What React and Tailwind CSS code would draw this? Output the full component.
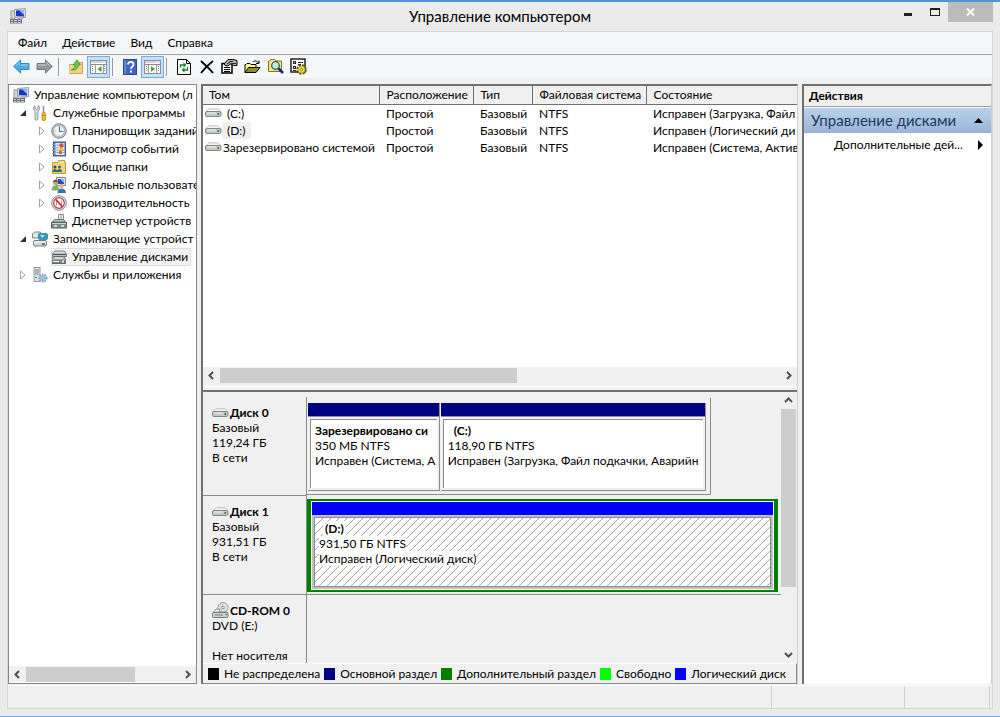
import clsx from "clsx"

function ComputerIcon() {
  return (
    <svg width="16" height="16" viewBox="0 0 16 16">
      <rect x="1" y="3" width="4" height="8" fill="#d4d8dc" stroke="#8d959c" />
      <path d="M4.500 1.500L15.500.5v9l-11-.5z" fill="#d9dde0" stroke="#9aa0a5" />
      <path d="M6 2.500L14 2v6.500L6 8z" fill="#1636c8" />
      <path d="M9 2.300L14 2v5z" fill="#8fbcf6" />
      <path d="M8 9.500h5l1 1.500H7z" fill="#b4b8bc" />
      <rect x="0" y="11" width="12" height="4.500" fill="#6f777d" />
      <path d="M1 12.500h2M4 12.500h3M8 12.500h3M1 14.500h2M4 14.500h3M8 14.500h3" stroke="#c9ced1" />
    </svg>
  )
}

function ToolsIcon() {
  return (
    <svg width="16" height="16" viewBox="0 0 16 16">
      <path d="M3 .5v3l1.500 1 1.500-1v-3c1.500 1 2 2.500 1.500 4L6 6.500V14c0 1.500-3 1.500-3 0V6.500C1 5 1 2 3 .5z" fill="#d7dadd" stroke="#80868b" strokeWidth="0.800" />
      <path d="M11.500 1v7" stroke="#8b8f93" strokeWidth="1.500" />
      <rect x="10" y="7.500" width="3.500" height="8" rx="1.500" fill="#f7bd22" stroke="#b98310" strokeWidth="0.800" />
      <path d="M10 10.500h3.500" stroke="#b27b0a" strokeWidth="0.800" />
    </svg>
  )
}

function ClockIcon() {
  return (
    <svg width="16" height="16" viewBox="0 0 16 16">
      <circle cx="8" cy="8" r="7.300" fill="#c3c7ca" stroke="#84898e" />
      <circle cx="8" cy="8" r="5.500" fill="#f3f8fa" stroke="#9aa3ab" strokeWidth="0.800" />
      <path d="M8.500 3.500V8.500h4" fill="none" stroke="#58748f" strokeWidth="1.200" />
      <path d="M4 8h1M8 12.500v-1" stroke="#d39b36" />
    </svg>
  )
}

function EventsIcon() {
  return (
    <svg width="16" height="16" viewBox="0 0 16 16">
      <rect x="2.500" y="1" width="12" height="14" fill="#5a82c4" stroke="#34579b" />
      <rect x="4.500" y="2" width="9" height="12" fill="#dde8f5" />
      <path d="M1 3.500h3M1 6.500h3M1 9.500h3M1 12.500h3" stroke="#9aa1a7" />
      <path d="M5.500 4h3M5.500 6.500h2M5.500 9h2M5.500 11.500h2M12 9h1.500M12 11.500h1.500" stroke="#7d9acb" />
      <circle cx="10.500" cy="4.500" r="2.200" fill="#dd4a3c" />
      <path d="M8 9.500L10 6l2 3.500z" fill="#f4c22b" stroke="#c4900c" strokeWidth="0.500" />
      <circle cx="9.500" cy="11.500" r="1.800" fill="#e2574a" />
    </svg>
  )
}

function SharedFolderIcon() {
  return (
    <svg width="16" height="16" viewBox="0 0 16 16">
      <path d="M1.500 3.500h5l1-2h6v2h1v11h-13z" fill="#f0d37a" stroke="#c39a32" />
      <path d="M8 3h5" stroke="#fff4cf" />
      <circle cx="4" cy="8" r="1.500" fill="#4a4a3a" />
      <circle cx="8.500" cy="8" r="1.500" fill="#3c5f8e" />
      <path d="M1.500 13c0-4 5-4 5 0zM6 13c0-4 5-4 5 0z" fill="#236f78" />
    </svg>
  )
}

function UsersIcon() {
  return (
    <svg width="16" height="16" viewBox="0 0 16 16">
      <rect x="5.500" y=".5" width="9" height="8" fill="#dfe3e6" stroke="#868c92" />
      <rect x="7" y="2" width="6" height="5" fill="#2148c4" />
      <path d="M9 2h4v4z" fill="#8fb9f2" />
      <circle cx="4.500" cy="5.500" r="2.500" fill="#d3a05f" />
      <path d="M2 5c0-3.500 5-3.500 5 0z" fill="#71583a" />
      <path d="M.5 13.500c0-7 8-7 8 0z" fill="#7db36b" />
      <circle cx="10.500" cy="9" r="2.200" fill="#e2b37c" />
      <path d="M6.500 16c0-6 8.500-6 8.500 0z" fill="#3b70b7" />
    </svg>
  )
}

function PerformanceIcon() {
  return (
    <svg width="16" height="16" viewBox="0 0 16 16">
      <circle cx="8" cy="8" r="7.300" fill="#e3e5e6" stroke="#8a8f94" />
      <circle cx="8" cy="8" r="5.300" fill="#fff" stroke="#c83a3a" strokeWidth="1.200" />
      <path d="M5.500 10.500v-5M10.500 10.500v-5" fill="none" stroke="#d98488" />
      <path d="M5 4.500l6 7" stroke="#c4262c" strokeWidth="1.600" />
    </svg>
  )
}

function DevicesIcon() {
  return (
    <svg width="16" height="16" viewBox="0 0 16 16">
      <path d="M7.500 7.500v-6h5v6" fill="#edf1ef" stroke="#8b9491" />
      <path d="M9 3h2M9 5h2" stroke="#91a29b" />
      <path d="M1.500 9l2-2.500h9l2 2.500z" fill="#b9c6c0" stroke="#69756f" />
      <rect x=".5" y="9.500" width="15" height="5.500" fill="#7f8e87" stroke="#57635e" />
      <path d="M1 10.500h14" stroke="#cbd7d1" />
      <rect x="3" y="12" width="3" height="2" fill="#c5d8cc" />
      <rect x="10" y="12" width="3" height="2" fill="#c5d8cc" />
    </svg>
  )
}

function StorageIcon() {
  return (
    <svg width="16" height="16" viewBox="0 0 16 16">
      <path d="M.5 3l2-2h6v6h-8z" fill="#dfe4e5" stroke="#7d878b" />
      <rect x="6.500" y="2.500" width="9" height="6" rx="1" fill="#279bc8" stroke="#5b8798" />
      <path d="M8 4h5l-3 3z" fill="#a8e2f3" />
      <rect x="1.500" y="9.500" width="13" height="5.500" rx="1.500" fill="#d3d9d6" stroke="#75807b" />
      <path d="M2 11h12" stroke="#fff" />
      <rect x="10" y="12" width="3" height="2" fill="#3fa447" />
    </svg>
  )
}

function DiskManagementIcon() {
  return (
    <svg width="16" height="16" viewBox="0 0 16 16">
      <path d="M1.500 5.500C2 3 3.500 2 5 2h7c1.500 0 3 1 3.500 3.500v2h-14z" fill="#dcdfdf" stroke="#777e80" />
      <path d="M2 5.500h13" stroke="#4f5658" strokeWidth="1.500" />
      <path d="M.5 10.500c.5-2 1.500-3 3-3h8c1.500 0 2.500 1 3 3v4H.5z" fill="#b9c0bf" stroke="#5f6768" />
      <rect x="1" y="10.500" width="13" height="3.500" fill="#7e8687" />
      <path d="M4 9h7M2 12.500h6" stroke="#eef0f0" />
      <rect x="11" y="11.500" width="2" height="2" fill="#e9eeee" />
    </svg>
  )
}

function ServicesIcon() {
  return (
    <svg width="16" height="16" viewBox="0 0 16 16">
      <rect x="2" y=".5" width="6" height="14" fill="#dde2e3" stroke="#929a9e" />
      <path d="M3 3h4M3 5h4M3 7h4" stroke="#798489" />
      <rect x="3" y="10" width="2" height="1" fill="#37a540" />
      <circle cx="11" cy="11" r="3.500" fill="#b7d2e9" stroke="#7ba3c6" strokeWidth="2" strokeDasharray="1.500 1" />
      <circle cx="11" cy="11" r="1.300" fill="#fff" stroke="#6f9ac0" />
    </svg>
  )
}

function DriveIcon() {
  return (
    <svg className="shrink-0" width="17" height="10" viewBox="0 0 17 10">
      <path d="M.8 4.500C1.500 2.500 3 1 4.500.8h8C14 1 15.300 2.500 16 4.500z" fill="#f4f4f4" stroke="#b4b7b6" strokeWidth="0.800" />
      <rect x=".5" y="3.500" width="15.500" height="5" rx="1.500" fill="#c4c8c6" stroke="#787e78" strokeWidth="0.900" />
      <path d="M2 5h9" stroke="#f1f2f1" />
      <rect x="12.500" y="5" width="1.500" height="2" fill="#337c3e" />
    </svg>
  )
}

function CdIcon() {
  return (
    <svg className="shrink-0" width="17" height="17" viewBox="0 0 17 17">
      <circle cx="11" cy="5.500" r="5" fill="#e3e5e5" stroke="#999d9d" />
      <path d="M11 .5L9 10M7 2l8 7" stroke="#bcc2c1" />
      <circle cx="11" cy="5.500" r="1.300" fill="#fff" stroke="#8e9292" />
      <path d="M1 11l3-4h4l-1 3h8l1 1z" fill="#e3e3e3" stroke="#939796" />
      <rect x=".5" y="10.500" width="15.500" height="5" rx="1" fill="#d0d2d0" stroke="#777d79" />
      <path d="M3 13h8" stroke="#797e7b" />
      <rect x="13" y="12" width="2" height="1" fill="#3fa447" />
    </svg>
  )
}

function ArrowIcon({ color, stroke, back }) {
  return (
    <svg width="17" height="15" viewBox="0 0 17 15">
      <path
        d={back ? "M.7 7.500L7.500 1v3.500H16v6H7.500V14z" : "M16.300 7.500L9.500 1v3.500H1v6h8.500V14z"}
        fill={color}
        stroke={stroke}
      />
      <path d={back ? "M3.500 6.500L6.500 3.500M8 6h7" : "M2 6h8.500M10.500 3.500l3 3"} stroke="#fff" strokeOpacity="0.500" />
    </svg>
  )
}

function FolderUpIcon() {
  return (
    <svg width="16" height="16" viewBox="0 0 16 16">
      <path d="M1.500 5.500h6l1.500-2h5.500v11h-13z" fill="#f2d184" stroke="#cfa450" />
      <path d="M2 14V7h12" fill="none" stroke="#fae7b4" />
      <path d="M3 11c3-1 4-3 4-5H5L9 .8 12.500 6h-2C10.500 9 8 11.500 3 11z" fill="#6fc544" stroke="#3b8c1e" strokeWidth="0.700" />
    </svg>
  )
}

function PaneIcon({ right }) {
  return (
    <svg width="17" height="14" viewBox="0 0 17 14">
      <rect x=".5" y=".5" width="16" height="13" fill="#fbfbf8" stroke="#888f96" />
      <path d="M1 2h15" stroke="#a5adb5" />
      <path d="M11 2h1M13 2h2" stroke="#fff" />
      <path d="M1 4.500h15" stroke="#888f96" />
      <path d={right ? "M12.500 5v8M4.500 5v8" : "M5.500 5v8M13.500 5v8"} stroke="#9ba1a7" />
      <path d="M2 6.500h1M2 8.500h1M2 10.500h1M14 6.500h1M14 8.500h1M14 10.500h1" stroke="#71869b" />
      <path d={right ? "M7 6v6l4-3z" : "M11.500 6v6l-4-3z"} fill="#43a32d" />
    </svg>
  )
}

function HelpIcon() {
  return (
    <svg width="14" height="16" viewBox="0 0 14 16">
      <rect x=".5" y=".5" width="13" height="15" fill="#4164c6" stroke="#2c469c" />
      <path d="M2 1v14" stroke="#8ea7e6" />
      <path d="M5 5.500c0-3.500 5.500-3.500 5.500 0 0 2-2.500 2-2.500 4.500" fill="none" stroke="#fff" strokeWidth="1.800" />
      <rect x="7" y="11.500" width="2" height="2" fill="#fff" />
    </svg>
  )
}

function RefreshIcon() {
  return (
    <svg width="14" height="16" viewBox="0 0 14 16">
      <path d="M.5.5h9l4 4v11H.5z" fill="#fff" stroke="#000" />
      <path d="M9.500.5v4h4" fill="none" stroke="#000" />
      <path d="M3.500 8.500V6H7" fill="none" stroke="#168025" strokeWidth="1.300" />
      <path d="M6.500 3.500v5L9.500 6z" fill="#168025" />
      <path d="M10.500 8v3H7" fill="none" stroke="#168025" strokeWidth="1.300" />
      <path d="M7.500 8.500v5l-3-2.500z" fill="#168025" />
    </svg>
  )
}

function DeleteIcon() {
  return (
    <svg width="14" height="14" viewBox="0 0 14 14">
      <path d="M1 1c3 3 8 7 12 12M13 1C9 4 5 8 1 13" fill="none" stroke="#000" strokeWidth="1.800" />
    </svg>
  )
}

function PropertiesIcon() {
  return (
    <svg width="17" height="15" viewBox="0 0 17 15">
      <path d="M1 4.500h10v9.500H1z" fill="#fff" stroke="#000" strokeWidth="1.500" />
      <path d="M3 8.500h6M3 10.500h6M3 12.500h6" stroke="#000" />
      <path d="M3 5l4-4.500h5l4 1v5h-3.500L10 4.500 7 7 4 6.500z" fill="#b5b3ae" stroke="#000" />
      <path d="M8.500 2.500H12M11 4.500h4M6 5l3-2" stroke="#222" />
    </svg>
  )
}

function OpenIcon() {
  return (
    <svg width="17" height="14" viewBox="0 0 17 14">
      <path d="M1 12.500v-8h1l1-1h3l1 1h5v3" fill="#fff39a" stroke="#000" />
      <path d="M1 12.500l3.500-5H16l-4 5z" fill="#938e22" stroke="#000" />
      <path d="M9 2c2-2 4-1 5.500 1M15 .5v3h-3" fill="none" stroke="#000" />
    </svg>
  )
}

function SearchIcon() {
  return (
    <svg width="16" height="15" viewBox="0 0 16 15">
      <path d="M.5 12.500V2h1l1-1.500h4L8 2h5.500v10.500z" fill="#f1e685" stroke="#827615" />
      <circle cx="7.500" cy="6.500" r="3.800" fill="#a9eef2" stroke="#444" strokeWidth="1.200" />
      <path d="M5.500 6c0-1.500 1-2 2-2" fill="none" stroke="#fff" />
      <path d="M10.500 9.500L15 14" stroke="#17238d" strokeWidth="2.500" />
    </svg>
  )
}

function SettingsIcon() {
  return (
    <svg width="17" height="17" viewBox="0 0 17 17">
      <rect x="1" y="1" width="14" height="13" fill="#fff" stroke="#222" strokeWidth="1.500" />
      <rect x="3.500" y="3.500" width="2" height="2" fill="none" stroke="#222" />
      <rect x="3.500" y="8.500" width="2" height="2" fill="none" stroke="#222" />
      <path d="M8 4.500h5M8 6.500h3M3 12.500h3" stroke="#222" />
      <circle cx="11.500" cy="11.500" r="4" fill="none" stroke="#57500b" strokeWidth="2.500" strokeDasharray="2 1.140" />
      <circle cx="11.500" cy="11.500" r="3.500" fill="#f3df38" stroke="#a89a1c" strokeWidth="0.700" />
      <circle cx="11.500" cy="11.500" r="1.200" fill="#fff" stroke="#57500b" strokeWidth="0.700" />
    </svg>
  )
}

function Chevron({ dir }) {
  const paths = {
    left: "M7 2L3.500 5.500 7 9",
    right: "M4 2l3.500 3.500L4 9",
    up: "M2 7l3.500-3.500L9 7",
    down: "M2 4l3.500 3.500L9 4",
  }
  return (
    <svg width="11" height="11" viewBox="0 0 11 11">
      <path d={paths[dir]} fill="none" stroke="#505050" strokeWidth="2" />
    </svg>
  )
}

const treeItems = [
  { label: "Управление компьютером (л", level: 0, icon: ComputerIcon },
  { label: "Служебные программы", level: 1, icon: ToolsIcon, state: "open" },
  { label: "Планировщик заданий", level: 2, icon: ClockIcon, state: "closed" },
  { label: "Просмотр событий", level: 2, icon: EventsIcon, state: "closed" },
  { label: "Общие папки", level: 2, icon: SharedFolderIcon, state: "closed" },
  { label: "Локальные пользовате", level: 2, icon: UsersIcon, state: "closed" },
  { label: "Производительность", level: 2, icon: PerformanceIcon, state: "closed" },
  { label: "Диспетчер устройств", level: 2, icon: DevicesIcon },
  { label: "Запоминающие устройст", level: 1, icon: StorageIcon, state: "open" },
  { label: "Управление дисками", level: 2, icon: DiskManagementIcon, selected: true },
  { label: "Службы и приложения", level: 1, icon: ServicesIcon, state: "closed" },
]

const indents = ["pl-1", "pl-[7px]", "pl-[26px]"]

const volumes = [
  { name: "(C:)", fs: "NTFS", status: "Исправен (Загрузка, Файл" },
  { name: "(D:)", fs: "NTFS", status: "Исправен (Логический ди", selected: true },
  { name: "Зарезервировано системой", fs: "NTFS", status: "Исправен (Система, Актив", long: true },
]

const legend = [
  { label: "Не распределена", color: "bg-black" },
  { label: "Основной раздел", color: "bg-[#000080]" },
  { label: "Дополнительный раздел", color: "bg-[#008000]" },
  { label: "Свободно", color: "bg-[#00ff00]" },
  { label: "Логический диск", color: "bg-[#0000ff]" },
]

function TreeItem({ item }) {
  const Icon = item.icon
  return (
    <li className={clsx("flex h-[18px] items-center", indents[item.level])}>
      {item.level > 0 && (
        <span className="flex w-4 shrink-0 items-center pl-[3px]">
          {item.state && (
            <svg width="8" height="10" viewBox="0 0 8 10">
              {item.state === "open" ? (
                <path d="M7 2v6H1z" fill="#303030" />
              ) : (
                <path d="M1.500 1v8L6 5z" fill="#fff" stroke="#a0a0a0" />
              )}
            </svg>
          )}
        </span>
      )}
      <a
        href="#"
        className={clsx(
          "flex h-[18px] items-center gap-[5px] whitespace-nowrap pr-[3px]",
          item.selected && "bg-[#f3f3f3] outline -outline-offset-1 outline-[#dedede]"
        )}
      >
        <Icon />
        {item.label}
      </a>
    </li>
  )
}

function ToolButton({ label, active, children }) {
  return (
    <button
      type="button"
      aria-label={label}
      className={clsx(
        "flex h-[22px] w-[23px] items-center justify-center",
        active && "border border-[#77aee0] bg-[#c5e0f7]"
      )}
    >
      {children}
    </button>
  )
}

function Separator() {
  return (
    <div className="h-[18px] w-2 pl-[2px]">
      <div className="h-full w-px bg-[#9a9a9a]" />
    </div>
  )
}

function DiskLabel({ icon, name, lines }) {
  return (
    <div className="w-[104px] shrink-0 border-r border-b border-[#8c8c8c] pt-2 pl-[9px] leading-[15px]">
      <div className="flex h-[15px] items-center gap-px whitespace-nowrap font-bold">
        {icon}
        {name}
      </div>
      {lines.map((line, i) => (
        <div key={i} className="h-[15px] whitespace-nowrap">{line}</div>
      ))}
    </div>
  )
}

function Partition({ name, size, status, indent }) {
  return (
    <div className="flex min-w-0 flex-col border-r border-b border-[#8c8c8c]">
      <div className="h-[14px] border-b border-[#8c8c8c] bg-[#000080]" />
      <div className="m-[2px] flex-1 overflow-hidden border-t border-l border-[#8c8c8c] bg-white pt-[3px] pl-1 leading-[15px] whitespace-nowrap">
        <div className={clsx("font-bold", indent && "pl-[6px]")}>{name}</div>
        <div>{size}</div>
        <div>{status}</div>
      </div>
    </div>
  )
}

function VolumeTable() {
  return (
    <table className="w-full table-fixed border-collapse">
      <colgroup>
        <col className="w-[176px]" />
        <col className="w-[94px]" />
        <col className="w-[59px]" />
        <col className="w-[114px]" />
        <col />
      </colgroup>
      <thead>
        <tr className="h-[18px] border-b border-[#707070] bg-[#f0f0f0] text-left">
          {["Том", "Расположение", "Тип", "Файловая система", "Состояние"].map((title, i) => (
            <th
              key={title}
              className={clsx(
                "overflow-hidden p-0 font-normal whitespace-nowrap leading-[17px]",
                i === 0 ? "pl-[6px]" : "pl-[7px]",
                i < 4 && "border-r border-[#707070]"
              )}
            >
              {title}
            </th>
          ))}
        </tr>
      </thead>
      <tbody>
        {volumes.map((volume) => (
          <tr key={volume.name} className="h-[17px] leading-[17px] whitespace-nowrap">
            <td className="p-0 pl-[2px]">
              <div className="flex items-center">
                <DriveIcon />
                <span className={clsx(volume.long ? "pl-px" : "px-[5px]", volume.selected && "bg-[#f0f0f0]")}>
                  {volume.name}
                </span>
              </div>
            </td>
            <td className="overflow-hidden p-0 pl-[7px]">Простой</td>
            <td className="overflow-hidden p-0 pl-[7px]">Базовый</td>
            <td className="overflow-hidden p-0 pl-[7px]">{volume.fs}</td>
            <td className="overflow-hidden p-0 pl-[7px]">{volume.status}</td>
          </tr>
        ))}
      </tbody>
    </table>
  )
}

function DiskMap() {
  return (
    <div className="flex min-h-0 flex-1">
      <div className="min-w-0 flex-1 overflow-hidden pt-[5px]">
        <div className="flex h-[99px]">
          <DiskLabel icon={<DriveIcon />} name="Диск 0" lines={["Базовый", "119,24 ГБ", "В сети"]} />
          <div className="grid min-w-0 flex-1 grid-cols-[404fr_70fr]">
            <div className="mt-px mb-px grid min-w-0 grid-cols-[132fr_266fr] gap-px border-r border-b border-[#8c8c8c] pt-[5px] pr-1 pb-[3px] pl-px">
              <Partition name="Зарезервировано си" size="350 МБ NTFS" status="Исправен (Система, А" />
              <Partition name="(C:)" size="118,90 ГБ NTFS" status="Исправен (Загрузка, Файл подкачки, Аварийн" indent />
            </div>
          </div>
        </div>

        <div className="flex h-[99px]">
          <DiskLabel icon={<DriveIcon />} name="Диск 1" lines={["Базовый", "931,51 ГБ", "В сети"]} />
          <div className="flex min-w-0 flex-1 border-b border-[#8c8c8c] pt-[3px] pr-[3px] pb-[2px]">
            <div className="flex flex-1 flex-col border-x-4 border-y-2 border-[#008000] bg-white p-px">
              <div className="h-[13px] bg-[#0000ff]" />
              <div className="flex-1 border-2 border-[#c0c0c0]">
                <div className="h-full border border-[#8c8c8c] bg-[linear-gradient(135deg,transparent_46%,#a8a8a8_46%,#a8a8a8_54%,transparent_54%)] bg-size-[8px_8px] pt-[3px] pl-1 leading-[15px]">
                  <div className="flex pl-1"><span className="bg-white px-[2px] font-bold">(D:)</span></div>
                  <div className="flex"><span className="bg-white">931,50 ГБ NTFS</span></div>
                  <div className="flex"><span className="bg-white">Исправен (Логический диск)</span></div>
                </div>
              </div>
            </div>
          </div>
        </div>

        <div className="flex h-[99px]">
          <DiskLabel icon={<CdIcon />} name="CD-ROM 0" lines={["DVD (E:)", "", "Нет носителя"]} />
        </div>
      </div>

      <div className="flex w-4 shrink-0 flex-col items-center pr-px">
        <button type="button" aria-label="Вверх" className="flex h-[17px] items-center"><Chevron dir="up" /></button>
        <div className="h-[178px] w-[15px] bg-[#cdcdcd]" />
        <div className="flex-1" />
        <button type="button" aria-label="Вниз" className="flex h-[17px] items-center"><Chevron dir="down" /></button>
      </div>
    </div>
  )
}

function HorizontalScroll({ thumb }) {
  return (
    <div className="flex h-4 shrink-0 items-center bg-[#f0f0f0]">
      <button type="button" aria-label="Влево" className="flex w-[17px] justify-center"><Chevron dir="left" /></button>
      <div className="h-[15px] flex-1"><div className={clsx("h-full bg-[#cdcdcd]", thumb)} /></div>
      <button type="button" aria-label="Вправо" className="flex w-[17px] justify-center"><Chevron dir="right" /></button>
    </div>
  )
}

export default function App() {
  return (
    <div className="flex h-screen flex-col overflow-hidden border-t-2 border-b border-t-[#4f94d8] border-b-[#5fb4ea] bg-[#ebebeb] px-[7px] pb-[7px] font-[Lato,'Noto_Sans',sans-serif] text-[12px] text-black">
      <header className="flex h-[29px] shrink-0 items-start">
        <div className="w-[140px] pt-[6px] pl-[3px]"><ComputerIcon /></div>
        <h1 className="flex-1 text-center text-[15px] leading-[29px]">Управление компьютером</h1>
        <div className="flex w-[140px] justify-end">
          <button type="button" aria-label="Свернуть" className="flex h-5 w-[26px] items-center justify-center">
            <span className="mt-1 h-[3px] w-2 bg-[#202020]" />
          </button>
          <button type="button" aria-label="Развернуть" className="flex h-5 w-[27px] items-center justify-center">
            <span className="h-2 w-[10px] border border-t-2 border-[#202020]" />
          </button>
          <button type="button" aria-label="Закрыть" className="flex h-5 w-[45px] items-center justify-center bg-[#bcbcbc]">
            <svg width="9" height="8" viewBox="0 0 9 8">
              <path d="M1 .5l7 7M8 .5l-7 7" stroke="#fff" strokeWidth="1.800" />
            </svg>
          </button>
        </div>
      </header>

      <div className="flex min-h-0 flex-1 flex-col border border-[#d6d6d6] bg-[#f0f0f0]">
        <nav className="flex h-[23px] shrink-0 items-center gap-[15px] border-b border-[#a5a5a5] bg-[#f5f6f7] pl-[10px]">
          {["Файл", "Действие", "Вид", "Справка"].map((item) => (
            <button type="button" key={item}>{item}</button>
          ))}
        </nav>

        <div className="flex h-[23px] shrink-0 items-center bg-[#f5f6f7] pl-[2px]">
          <ToolButton label="Назад"><ArrowIcon back color="#4bb0e8" stroke="#3486bd" /></ToolButton>
          <ToolButton label="Вперёд"><ArrowIcon color="#94989b" stroke="#75797d" /></ToolButton>
          <Separator />
          <ToolButton label="Вверх на один уровень"><FolderUpIcon /></ToolButton>
          <ToolButton label="Дерево консоли" active><PaneIcon /></ToolButton>
          <Separator />
          <ToolButton label="Справка"><HelpIcon /></ToolButton>
          <ToolButton label="Панель действий" active><PaneIcon right /></ToolButton>
          <Separator />
          <div className="flex">
            <ToolButton label="Обновить"><RefreshIcon /></ToolButton>
            <ToolButton label="Удалить"><DeleteIcon /></ToolButton>
            <ToolButton label="Свойства"><PropertiesIcon /></ToolButton>
            <ToolButton label="Открыть"><OpenIcon /></ToolButton>
            <ToolButton label="Поиск"><SearchIcon /></ToolButton>
            <ToolButton label="Параметры"><SettingsIcon /></ToolButton>
          </div>
        </div>

        <main className="flex min-h-0 flex-1 gap-1 pt-[6px] pb-px">
          <aside className="flex w-[189px] shrink-0 flex-col border border-[#828790] bg-white pb-px">
            <ul className="min-h-0 flex-1 overflow-hidden pt-px">
              {treeItems.map((item) => <TreeItem key={item.label} item={item} />)}
            </ul>
            <HorizontalScroll thumb="w-[71%]" />
          </aside>

          <section className="flex min-w-0 flex-1 flex-col border-t-2 border-l-2 border-r border-b border-t-[#707070] border-l-[#707070] border-r-[#d0d0d0] border-b-[#8c8c8c]">
            <div className="flex h-[297px] shrink-0 flex-col bg-white">
              <div className="min-h-0 flex-1"><VolumeTable /></div>
              <HorizontalScroll thumb="w-[53%]" />
            </div>
            <div className="flex h-[9px] shrink-0 flex-col justify-center border-b-2 border-[#707070]">
              <div className="h-px bg-white" />
            </div>
            <DiskMap />
            <ul className="flex h-5 shrink-0 items-center justify-between border-t border-r border-t-white border-r-[#8c8c8c] pr-[10px] pl-[5px] whitespace-nowrap">
              {legend.map((item) => (
                <li key={item.label} className="flex items-center gap-[5px]">
                  <span className={clsx("h-3 w-[11px]", item.color)} />
                  {item.label}
                </li>
              ))}
            </ul>
          </section>

          <aside className="w-[190px] shrink-0 border-t-2 border-l-2 border-r border-t-[#707070] border-l-[#707070] border-r-[#d0d0d0] bg-white">
            <h2 className="h-[21px] border-b border-[#a0a0a0] bg-[#f0f0f0] pl-[5px] font-bold leading-[20px]">Действия</h2>
            <button type="button" className="mt-px flex h-[25px] w-full items-center justify-between bg-linear-to-b from-[#b9d1ea] to-[#98b4d6] pr-2 pl-[7px] text-[15px] text-[#1e395b]">
              Управление дисками
              <svg width="9" height="5" viewBox="0 0 9 5"><path d="M0 5h9L4.500 0z" fill="#000" /></svg>
            </button>
            <button type="button" className="flex h-[24px] w-full items-center justify-between pr-2 pl-[30px]">
              Дополнительные дей...
              <svg width="5" height="10" viewBox="0 0 5 10"><path d="M0 0v10l5-5z" fill="#000" /></svg>
            </button>
          </aside>
        </main>

        <footer className="flex h-[23px] shrink-0 justify-end border-t border-white pr-[2px]">
          <div className="w-[133px] border-l border-[#d0d0d0]" />
          <div className="w-[86px] border-x border-[#d0d0d0]" />
        </footer>
      </div>
    </div>
  )
}
